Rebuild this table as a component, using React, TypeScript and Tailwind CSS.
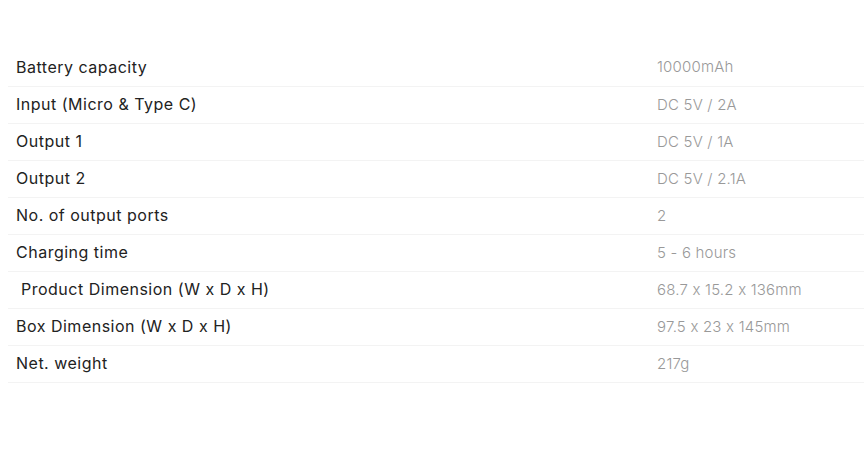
const specs: [string, string][] = [
  ["Battery capacity", "10000mAh"],
  ["Input (Micro & Type C)", "DC 5V / 2A"],
  ["Output 1", "DC 5V / 1A"],
  ["Output 2", "DC 5V / 2.1A"],
  ["No. of output ports", "2"],
  ["Charging time", "5 - 6 hours"],
  ["\u00a0Product Dimension (W x D x H)", "68.7 x 15.2 x 136mm"],
  ["Box Dimension (W x D x H)", "97.5 x 23 x 145mm"],
  ["Net. weight", "217g"],
];

export default function App() {
  return (
    <div className="min-h-[457px] bg-white pl-2 pt-[49px] font-['Inter',sans-serif] [font-feature-settings:'calt'_0]">
      <table className="w-[856px] border-collapse">
        <tbody>
          {specs.map(([label, value]) => (
            <tr key={label} className="h-[37px] border-b border-[#f3f3f3]">
              <td className="w-[641px] px-2 pb-px text-[16px] leading-[22px] tracking-[0.5px] text-[#222]">{label}</td>
              <td className="px-2 text-[15px] leading-[22px] font-light tracking-[0.2px] text-[#999]">{value}</td>
            </tr>
          ))}
        </tbody>
      </table>
    </div>
  );
}
